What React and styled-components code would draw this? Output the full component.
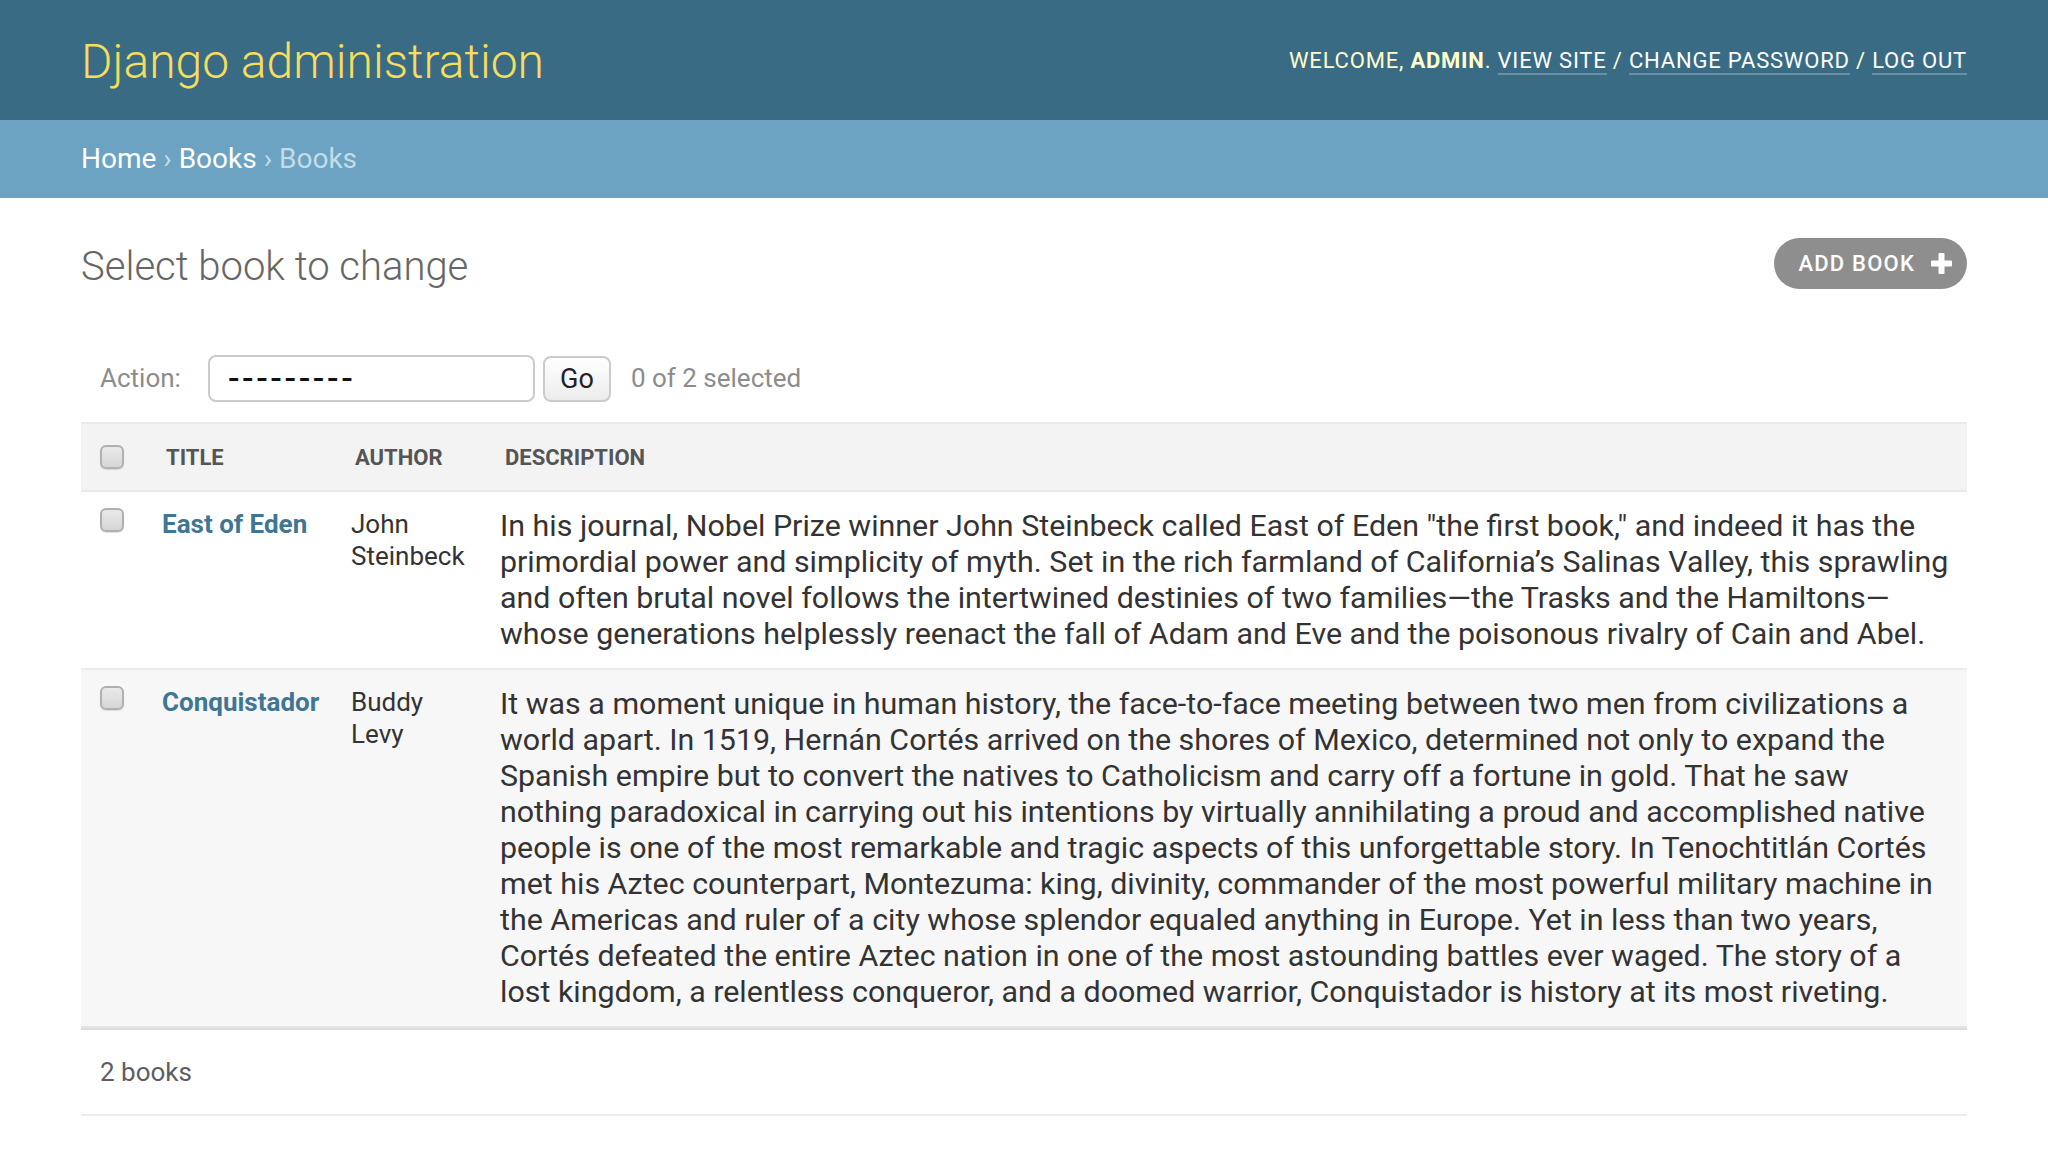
import React from "react";
import styled, { createGlobalStyle } from "styled-components";

const GlobalStyle = createGlobalStyle`
  html, body {
    margin: 0;
    padding: 0;
    background: #fff;
  }

  body {
    font-family: Roboto, "Liberation Sans", sans-serif;
    color: #333;
  }

  * {
    box-sizing: border-box;
  }
`;

const Header = styled.header`
  display: flex;
  justify-content: space-between;
  align-items: center;
  height: 120px;
  padding: 0 81px;
  background: #3a6b85;
`;

const Branding = styled.h1`
  margin: 3px 0 0;
  font-size: 48px;
  font-weight: 300;
  color: #f5dd5d;
`;

const UserTools = styled.div`
  font-size: 22px;
  letter-spacing: 0.8px;
  text-transform: uppercase;
  color: #ffffcc;

  strong {
    font-weight: 700;
  }
`;

const ToolLink = styled.a`
  color: #fff;
  text-decoration: none;
  border-bottom: 2px solid rgba(255, 255, 255, 0.25);
`;

const Breadcrumbs = styled.nav`
  padding: 20px 81px;
  line-height: 38px;
  font-size: 28px;
  color: #c4dce8;
  background: #6ca3c3;

  a {
    color: #fff;
    text-decoration: none;
  }
`;

const Content = styled.main`
  padding: 40px 81px 0;
`;

const TitleRow = styled.div`
  display: flex;
  justify-content: space-between;
  align-items: flex-start;
  height: 51px;
`;

const Title = styled.h1`
  margin: 5px 0 0 0;
  font-size: 40px;
  line-height: 47px;
  font-weight: 300;
  color: #666;
`;

const AddButton = styled.a`
  display: flex;
  align-items: center;
  gap: 16px;
  height: 51px;
  padding: 0 15px 0 25px;
  border-radius: 26px;
  background: #8e8e8e;
  color: #fff;
  font-size: 22px;
  font-weight: 500;
  letter-spacing: 1.2px;
  text-transform: uppercase;
  text-decoration: none;
`;

const ChangeList = styled.section`
  margin-top: 45px;
`;

const ActionBar = styled.div`
  display: flex;
  align-items: center;
  height: 88px;
  padding: 0 20px 0 19px;
  font-size: 26px;
  color: #8c8c8c;
`;

const ActionLabel = styled.label`
  margin-right: 27px;
`;

const SelectBox = styled.div`
  display: flex;
  align-items: center;
  width: 327px;
  height: 47px;
  padding-left: 18px;
  border: 2px solid #cbcbcb;
  border-radius: 8px;
  background: #fff;
  color: #111;
  font-size: 34px;
  font-weight: 500;
  letter-spacing: 2.6px;
`;

const GoButton = styled.button`
  width: 68px;
  height: 46px;
  margin: 2px 20px 0 8px;
  border: 2px solid #cbcbcb;
  border-radius: 8px;
  background: linear-gradient(#fff, #ececec);
  font-family: Roboto, "Liberation Sans", sans-serif;
  font-size: 27px;
  color: #222;
  padding: 0;
`;

const Table = styled.table`
  width: 100%;
  border-collapse: collapse;
  table-layout: fixed;
`;

const HeadCell = styled.th`
  height: 68px;
  padding: 0 16px 0 ${(p) => (p.$check ? "19px" : "20px")};
  text-align: left;
  vertical-align: middle;
  background: #f3f3f3;
  border-top: 2px solid #e9e9e9;
  border-bottom: 2px solid #e9e9e9;
  font-size: 22px;
  font-weight: 700;
  color: #555;
  text-transform: uppercase;
`;

const Row = styled.tr`
  background: ${(p) => (p.$alt ? "#f7f7f7" : "#fff")};
  border-bottom: 2px solid ${(p) => (p.$last ? "#e4e4e4" : "#ececec")};
`;

const Cell = styled.td`
  padding: 16px 16px 16px ${(p) => (p.$check ? "19px" : "16px")};
  vertical-align: top;
  font-size: 26px;
  line-height: 32px;
  color: #333;
`;

const DescCell = styled(Cell)`
  padding-left: 15px;
  font-size: 30.4px;
  line-height: 36px;
`;

const TitleLink = styled.a`
  color: #3f7694;
  font-weight: 700;
  text-decoration: none;
`;

const Checkbox = styled.span`
  display: block;
  width: 24px;
  height: 24px;
  border: 2px solid #b0b0b0;
  border-radius: 6px;
  background: linear-gradient(#e9e9e9, #d6d6d6);
  box-shadow: 0 1px 1px rgba(0, 0, 0, 0.12);
`;

const Paginator = styled.div`
  padding: 20px 19px;
  line-height: 44px;
  font-size: 26px;
  color: #5e5e5e;
  border-top: 2px solid #dcdcdc;
  border-bottom: 2px solid #ececec;
`;

const books = [
  {
    title: "East of Eden",
    author: "John Steinbeck",
    description:
      'In his journal, Nobel Prize winner John Steinbeck called East of Eden "the first book," and indeed it has the primordial power and simplicity of myth. Set in the rich farmland of California\u2019s Salinas Valley, this sprawling and often brutal novel follows the intertwined destinies of two families\u2014the Trasks and the Hamiltons\u2014whose generations helplessly reenact the fall of Adam and Eve and the poisonous rivalry of Cain and Abel.'
  },
  {
    title: "Conquistador",
    author: "Buddy Levy",
    description:
      "It was a moment unique in human history, the face-to-face meeting between two men from civilizations a world apart. In 1519, Hern\u00e1n Cort\u00e9s arrived on the shores of Mexico, determined not only to expand the Spanish empire but to convert the natives to Catholicism and carry off a fortune in gold. That he saw nothing paradoxical in carrying out his intentions by virtually annihilating a proud and accomplished native people is one of the most remarkable and tragic aspects of this unforgettable story. In Tenochtitl\u00e1n Cort\u00e9s met his Aztec counterpart, Montezuma: king, divinity, commander of the most powerful military machine in the Americas and ruler of a city whose splendor equaled anything in Europe. Yet in less than two years, Cort\u00e9s defeated the entire Aztec nation in one of the most astounding battles ever waged. The story of a lost kingdom, a relentless conqueror, and a doomed warrior, Conquistador is history at its most riveting."
  }
];

const PlusIcon = () => (
  <svg width="21" height="21" viewBox="0 0 21 21" fill="#fff">
    <rect x="7.5" y="0" width="6" height="21" rx="1" />
    <rect x="0" y="7.5" width="21" height="6" rx="1" />
  </svg>
);

export default function App() {
  return (
    <>
      <GlobalStyle />
      <Header>
        <Branding>Django administration</Branding>
        <UserTools>
          Welcome, <strong>admin</strong>.{" "}
          <ToolLink href="#">View site</ToolLink> /{" "}
          <ToolLink href="#">Change password</ToolLink> /{" "}
          <ToolLink href="#">Log out</ToolLink>
        </UserTools>
      </Header>
      <Breadcrumbs>
        <a href="#">Home</a> › <a href="#">Books</a> › Books
      </Breadcrumbs>
      <Content>
        <TitleRow>
          <Title>Select book to change</Title>
          <AddButton href="#">
            Add book
            <PlusIcon />
          </AddButton>
        </TitleRow>
        <ChangeList>
          <ActionBar>
            <ActionLabel>Action:</ActionLabel>
            <SelectBox>---------</SelectBox>
            <GoButton>Go</GoButton>
            <span>0 of 2 selected</span>
          </ActionBar>
          <Table>
            <colgroup>
              <col style={{ width: 65 }} />
              <col style={{ width: 189 }} />
              <col style={{ width: 150 }} />
              <col />
            </colgroup>
            <thead>
              <tr>
                <HeadCell $check>
                  <Checkbox />
                </HeadCell>
                <HeadCell>Title</HeadCell>
                <HeadCell>Author</HeadCell>
                <HeadCell>Description</HeadCell>
              </tr>
            </thead>
            <tbody>
              {books.map((book, i) => (
                <Row key={book.title} $alt={i % 2 === 1} $last={i === books.length - 1}>
                  <Cell $check>
                    <Checkbox />
                  </Cell>
                  <Cell>
                    <TitleLink href="#">{book.title}</TitleLink>
                  </Cell>
                  <Cell>{book.author}</Cell>
                  <DescCell>{book.description}</DescCell>
                </Row>
              ))}
            </tbody>
          </Table>
          <Paginator>2 books</Paginator>
        </ChangeList>
      </Content>
    </>
  );
}
